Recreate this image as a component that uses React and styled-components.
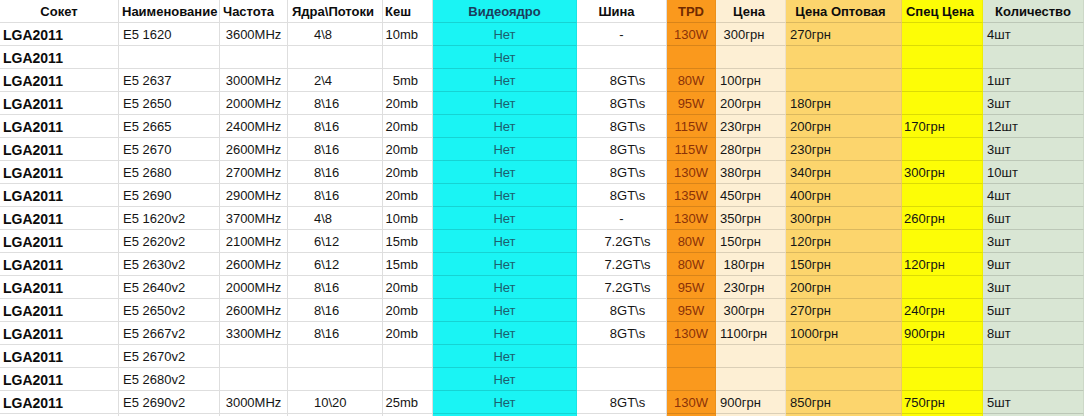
import React from "react";
import styled, { createGlobalStyle } from "styled-components";

const Global = createGlobalStyle`
  html, body { margin: 0; padding: 0; background: #fff; }
  body { font-family: "Liberation Sans", Arial, sans-serif; }
`;

const COLS = [
  { key: "socket", w: 119, bg: "#ffffff", align: "flex-start", pl: 3, pr: 0, bold: true, size: 14, color: "#0c0c0c" },
  { key: "name", w: 101, bg: "#ffffff", align: "flex-start", pl: 4, pr: 0, color: "#151515" },
  { key: "freq", w: 68, bg: "#ffffff", align: "center", pl: 0, pr: 0, color: "#151515" },
  { key: "cores", w: 95, bg: "#ffffff", align: "flex-start", pl: 26, pr: 0, color: "#151515" },
  { key: "cache", w: 50, bg: "#ffffff", align: "flex-end", pl: 0, pr: 14, color: "#151515" },
  { key: "gpu", w: 144, bg: "#1af4f4", align: "center", pl: 0, pr: 0, color: "#1c5f6e" },
  { key: "bus", w: 90, bg: "#ffffff", align: "center", pl: 12, pr: 0, color: "#151515" },
  { key: "tpd", w: 49, bg: "#fa991d", align: "center", pl: 0, pr: 0, color: "#8a3208" },
  { key: "price", w: 70, bg: "#fdefd4", align: "flex-start", pl: 4, pr: 0, color: "#151515" },
  { key: "opt", w: 116, bg: "#fcd56d", align: "flex-start", pl: 4, pr: 0, color: "#151515" },
  { key: "spec", w: 81, bg: "#fdfd06", align: "flex-start", pl: 2, pr: 0, color: "#151515" },
  { key: "qty", w: 101, bg: "#d9e6d4", align: "flex-start", pl: 4, pr: 0, color: "#151515" },
];

const HEADERS = [
  { t: "Сокет", align: "center", pl: 0, pr: 0 },
  { t: "Наименование", align: "flex-start", pl: 3, pr: 0 },
  { t: "Частота", align: "flex-start", pl: 3, pr: 0 },
  { t: "Ядра\\Потоки", align: "flex-start", pl: 4, pr: 0 },
  { t: "Кеш", align: "flex-start", pl: 2, pr: 0 },
  { t: "Видеоядро", align: "center", pl: 0, pr: 0, color: "#1b3d5c" },
  { t: "Шина", align: "center", pl: 0, pr: 10 },
  { t: "TPD", align: "center", pl: 0, pr: 0, color: "#702a00" },
  { t: "Цена", align: "center", pl: 0, pr: 3 },
  { t: "Цена Оптовая", align: "center", pl: 0, pr: 6 },
  { t: "Спец Цена", align: "center", pl: 0, pr: 4 },
  { t: "Количество", align: "center", pl: 0, pr: 0 },
];

const S = "\u00a0";
const ROWS = [
  ["E5 1620", "3600MHz", "4\\8", "10mb", "-", "130W", S + "300грн", "270грн", "", "4шт"],
  ["", "", "", "", "", "", "", "", "", ""],
  ["E5 2637", "3000MHz", "2\\4", "5mb", "8GT\\s", "80W", "100грн", "", "", "1шт"],
  ["E5 2650", "2000MHz", "8\\16", "20mb", "8GT\\s", "95W", "200грн", "180грн", "", "3шт"],
  ["E5 2665", "2400MHz", "8\\16", "20mb", "8GT\\s", "115W", "230грн", "200грн", "170грн", "12шт"],
  ["E5 2670", "2600MHz", "8\\16", "20mb", "8GT\\s", "115W", "280грн", "230грн", "", "3шт"],
  ["E5 2680", "2700MHz", "8\\16", "20mb", "8GT\\s", "130W", "380грн", "340грн", "300грн", "10шт"],
  ["E5 2690", "2900MHz", "8\\16", "20mb", "8GT\\s", "135W", "450грн", "400грн", "", "4шт"],
  ["E5 1620v2", "3700MHz", "4\\8", "10mb", "-", "130W", "350грн", "300грн", "260грн", "6шт"],
  ["E5 2620v2", "2100MHz", "6\\12", "15mb", "7.2GT\\s", "80W", "150грн", "120грн", "", "3шт"],
  ["E5 2630v2", "2600MHz", "6\\12", "15mb", "7.2GT\\s", "80W", S + "180грн", "150грн", "120грн", "9шт"],
  ["E5 2640v2", "2000MHz", "8\\16", "20mb", "7.2GT\\s", "95W", S + "230грн", "200грн", "", "3шт"],
  ["E5 2650v2", "2600MHz", "8\\16", "20mb", "8GT\\s", "95W", S + "300грн", "270грн", "240грн", "5шт"],
  ["E5 2667v2", "3300MHz", "8\\16", "20mb", "8GT\\s", "130W", "1100грн", "1000грн", "900грн", "8шт"],
  ["E5 2670v2", "", "", "", "", "", "", "", "", ""],
  ["E5 2680v2", "", "", "", "", "", "", "", "", ""],
  ["E5 2690v2", "3000MHz", "10\\20", "25mb", "8GT\\s", "130W", "900грн", "850грн", "750грн", "5шт"],
];

const Sheet = styled.div`
  width: 1084px;
  height: 416px;
  overflow: hidden;
  display: grid;
  grid-template-columns: ${COLS.map((c) => c.w + "px").join(" ")};
  grid-auto-rows: 23px;
`;

const Cell = styled.div`
  box-sizing: border-box;
  display: flex;
  align-items: center;
  justify-content: ${(p) => p.$align};
  padding: 1px ${(p) => p.$pr}px 0 ${(p) => p.$pl}px;
  background: ${(p) => p.$bg};
  color: ${(p) => p.$color};
  font-size: ${(p) => p.$size}px;
  font-weight: ${(p) => (p.$bold ? 700 : 400)};
  white-space: pre;
  overflow: visible;
  border-bottom: 1px solid rgba(0, 0, 0, 0.13);
  border-right: 1px solid rgba(0, 0, 0, ${(p) => (p.$tinted ? 0.06 : 0.13)});
`;

const HeadCell = styled(Cell)`
  font-weight: 700;
  font-size: 13px;
`;

function colProps(c) {
  return { $bg: c.bg, $tinted: c.bg !== "#ffffff" };
}

export default function App() {
  return (
    <>
      <Global />
      <Sheet>
        {HEADERS.map((h, i) => (
          <HeadCell
            key={"h" + i}
            {...colProps(COLS[i])}
            $align={h.align}
            $pl={h.pl}
            $pr={h.pr}
            $color={h.color || "#0c0c0c"}
          >
            {h.t}
          </HeadCell>
        ))}
        {ROWS.map((r, ri) => {
          const values = ["LGA2011", r[0], r[1], r[2], r[3], "Нет", r[4], r[5], r[6], r[7], r[8], r[9]];
          return values.map((v, ci) => {
            const c = COLS[ci];
            const dash = c.key === "bus" && v === "-";
            return (
              <Cell
                key={ri + "-" + ci}
                {...colProps(c)}
                $align={c.align}
                $pl={dash ? 0 : c.pl}
                $pr={c.pr}
                $color={c.color}
                $bold={c.bold}
                $size={c.size || 13}
              >
                {v}
              </Cell>
            );
          });
        })}
        {COLS.map((c, ci) => (
          <Cell key={"f" + ci} {...colProps(c)} $align="flex-start" $pl={0} $pr={0} $color="#151515" $size={13} />
        ))}
      </Sheet>
    </>
  );
}
